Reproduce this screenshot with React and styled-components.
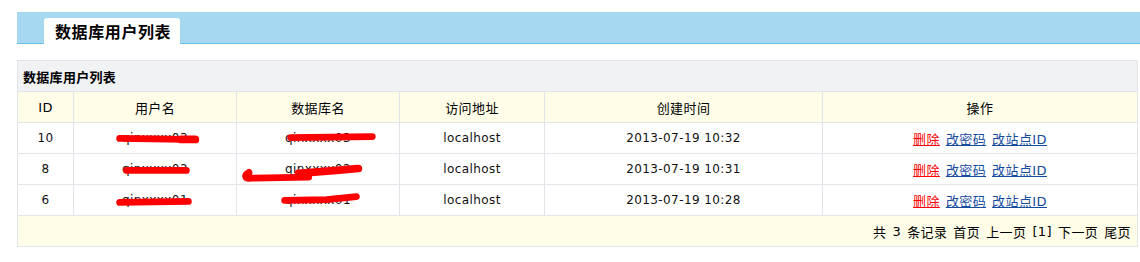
import React from 'react'
import styled, { createGlobalStyle } from 'styled-components'

const GlobalStyle = createGlobalStyle`
    html, body {
        margin: 0;
        padding: 0;
        background: #ffffff;
    }
    body {
        font-family: "DejaVu Sans", "Noto Sans CJK SC", sans-serif;
        font-size: 12px;
        color: #000;
    }
`;

const Page = styled.div`
    width: 1140px;
    padding: 12px 0 0 17px;
    box-sizing: border-box;
`;

const TabBar = styled.div`
    height: 31px;
    background: #a6d9ef;
    border-bottom: 1px solid #6cbfe8;
    display: flex;
    align-items: flex-end;
    padding-left: 27px;
`;

const Tab = styled.div`
    height: 26px;
    margin-bottom: -1px;
    width: 136px;
    box-sizing: border-box;
    padding-left: 11px;
    background: #ffffff;
    border-radius: 3px 3px 0 0;
    font-family: "Noto Sans CJK SC", sans-serif;
    font-size: 16px;
    font-weight: bold;
    letter-spacing: 0.6px;
    line-height: 26px;
`;

const Table = styled.table`
    margin-top: 16px;
    width: 1120px;
    border-collapse: collapse;
    table-layout: fixed;
    border: 1px solid #dfe2e6;

    td, th {
        border: 1px solid #e1e4e8;
        height: 30px;
        padding: 0;
        text-align: center;
        letter-spacing: 0.4px;
        font-weight: normal;
    }
`;

const Caption = styled.th`
    && {
        background: #f1f2f4;
        text-align: left;
        padding-left: 5px;
        font-family: "Noto Sans CJK SC", sans-serif;
        font-size: 13px;
        font-weight: bold;
        letter-spacing: 0.3px;
    }
`;

const HeadRow = styled.tr`
    background: #fffde8;

    th {
        font-size: 13px;
    }
`;

const Cell = styled.td`
    position: relative;
    color: ${p => p.$dark ? '#111' : '#000'};
`;

const FootCell = styled.td`
    && {
        background: #fffde8;
        text-align: right;
        padding-right: 6px;
        font-size: 13px;
    }
`;

const Pager = styled.div`
    display: inline-flex;
    gap: 6px;
    align-items: center;
`;

const Link = styled.a`
    color: ${p => p.$danger ? '#ff0000' : '#144b9c'};
    font-size: 13px;
    text-decoration: underline;
    margin: 0 3px;
    cursor: pointer;
`;

const Scribble = styled.svg`
    position: absolute;
    left: 0;
    top: 0;
    width: 100%;
    height: 100%;
    pointer-events: none;
`;

const rows = [
    {
        id: 10, user: 'qinxxxx03', db: 'qinxxxx03', time: '2013-07-19 10:32',
        userMark: ['M46 16 L110 17', 'M108 17 L122 17'],
        dbMark: ['M54 15 L136 14'],
    },
    {
        id: 8, user: 'qinxxxx02', db: 'qinxxxx02', time: '2013-07-19 10:31',
        userMark: ['M53 17 L113 17'],
        dbMark: ['M12 19 C7 22 8 26 14 25 L72 24', 'M62 20 L100 17 L122 15'],
    },
    {
        id: 6, user: 'qinxxxx01', db: 'qinxxxx01', time: '2013-07-19 10:28',
        userMark: ['M46 18 L115 17'],
        dbMark: ['M48 16 L90 15 L120 12'],
    },
];

function Redacted({ text, marks }) {
    return (
        <>
            {text}
            <Scribble viewBox="0 0 163 31" preserveAspectRatio="none">
                {marks.map((d, i) => (
                    <path key={i} d={d} stroke="#ff0000" strokeWidth={i === 1 ? 8 : 7}
                        strokeLinecap="round" strokeLinejoin="round" fill="none" />
                ))}
            </Scribble>
        </>
    )
}

export default function App() {
    return (
        <Page>
            <GlobalStyle />
            <TabBar>
                <Tab>数据库用户列表</Tab>
            </TabBar>
            <Table>
                <colgroup>
                    <col style={{ width: 56 }} />
                    <col style={{ width: 163 }} />
                    <col style={{ width: 163 }} />
                    <col style={{ width: 145 }} />
                    <col style={{ width: 278 }} />
                    <col style={{ width: 315 }} />
                </colgroup>
                <thead>
                    <tr>
                        <Caption colSpan={6}>数据库用户列表</Caption>
                    </tr>
                    <HeadRow>
                        <th>ID</th>
                        <th>用户名</th>
                        <th>数据库名</th>
                        <th>访问地址</th>
                        <th>创建时间</th>
                        <th>操作</th>
                    </HeadRow>
                </thead>
                <tbody>
                    {rows.map(r => (
                        <tr key={r.id}>
                            <Cell $dark>{r.id}</Cell>
                            <Cell $dark><Redacted text={r.user} marks={r.userMark} /></Cell>
                            <Cell $dark><Redacted text={r.db} marks={r.dbMark} /></Cell>
                            <Cell $dark>localhost</Cell>
                            <Cell $dark>{r.time}</Cell>
                            <Cell>
                                <Link $danger>删除</Link>
                                <Link>改密码</Link>
                                <Link>改站点ID</Link>
                            </Cell>
                        </tr>
                    ))}
                    <tr>
                        <FootCell colSpan={6}>
                            <Pager>
                                <span>共</span>
                                <span>3</span>
                                <span>条记录</span>
                                <span>首页</span>
                                <span>上一页</span>
                                <span>[1]</span>
                                <span>下一页</span>
                                <span>尾页</span>
                            </Pager>
                        </FootCell>
                    </tr>
                </tbody>
            </Table>
        </Page>
    )
}
